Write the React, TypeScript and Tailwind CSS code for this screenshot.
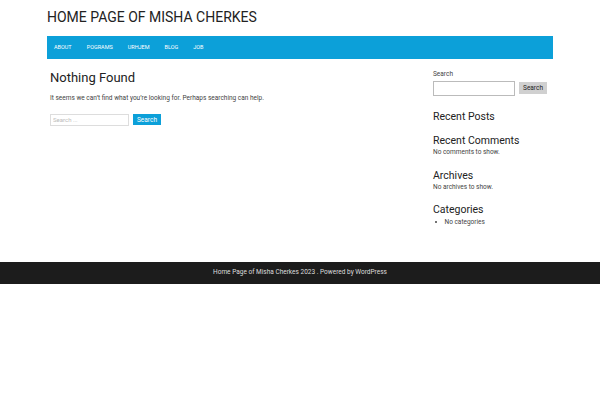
export default function App() {
  const menu = ['ABOUT', 'POGRAMS', 'URHJEM', 'BLOG', 'JOB'];
  return (
    <div className="min-h-[400px] bg-white text-[#333]" style={{ fontFamily: 'Roboto, "Liberation Sans", sans-serif' }}>
      <div className="w-[506px] ml-[47px]">
        <header className="h-[36px] flex items-center">
          <h1 className="text-[14px] leading-none text-[#222] -mt-[2px]">HOME PAGE OF MISHA CHERKES</h1>
        </header>

        {/* ── Nav ── */}
        <nav className="h-[23px] bg-[#0ca0d9] flex items-center pl-[7px] gap-[15px]">
          {menu.map((m) => (
            <a key={m} className="text-[5.5px] text-white leading-none">{m}</a>
          ))}
        </nav>

        <div className="flex pt-[12px]">
          {/* ── Content ── */}
          <main className="w-[383px] pl-[3px]">
            <h2 className="text-[13px] leading-none text-[#222]">Nothing Found</h2>
            <p className="text-[6.5px] text-[#444] mt-[10px]">It seems we can’t find what you’re looking for. Perhaps searching can help.</p>
            <div className="flex items-center gap-[4px] mt-[10px]">
              <input
                placeholder="Search ..."
                className="w-[79px] h-[12px] border border-[#ddd] px-[2px] text-[6px] placeholder:text-[#bbb] outline-none"
              />
              <button className="h-[11px] px-[4px] bg-[#0ca0d9] text-white text-[6.5px] leading-none">Search</button>
            </div>
          </main>

          {/* ── Sidebar ── */}
          <aside className="flex-1 pl-[3px]">
            <label className="block text-[6.5px] text-[#444] leading-none">Search</label>
            <div className="flex items-center gap-[4px] mt-[3px]">
              <input className="w-[82px] h-[15px] border border-[#bbb] outline-none" />
              <button className="h-[12px] w-[28px] bg-[#d0d0d0] text-[6.5px] text-[#222] leading-none">Search</button>
            </div>
            <h3 className="text-[10.5px] leading-none text-[#222] mt-[16px]">Recent Posts</h3>
            <h3 className="text-[10.5px] leading-none text-[#222] mt-[14px]">Recent Comments</h3>
            <p className="text-[6.5px] text-[#444] mt-[1px]">No comments to show.</p>
            <h3 className="text-[10.5px] leading-none text-[#222] mt-[14px]">Archives</h3>
            <p className="text-[6.5px] text-[#444] mt-[1px]">No archives to show.</p>
            <h3 className="text-[10.5px] leading-none text-[#222] mt-[12px]">Categories</h3>
            <ul className="list-disc list-inside pl-[2px] mt-[3px]">
              <li className="text-[6.5px] text-[#444]">No categories</li>
            </ul>
          </aside>
        </div>
      </div>

      <footer className="mt-[34px] h-[22px] bg-[#1c1c1c] flex items-center justify-center">
        <p className="text-[6.5px] text-[#ddd]">Home Page of Misha Cherkes 2023 . Powered by WordPress</p>
      </footer>
    </div>
  );
}
